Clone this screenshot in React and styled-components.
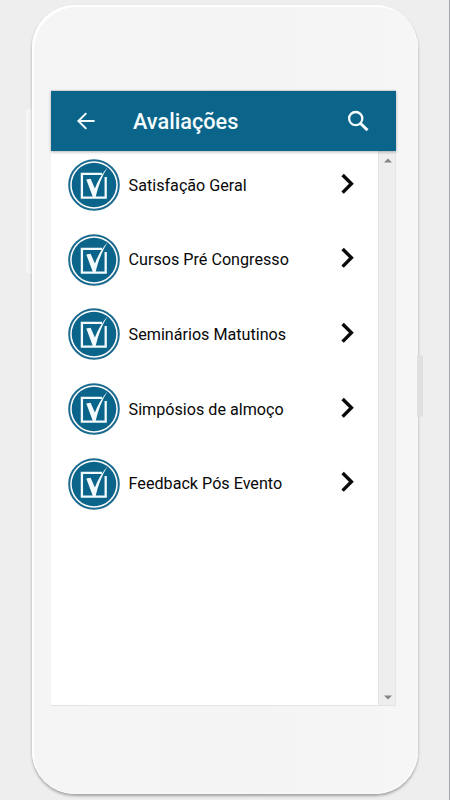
/**
*
* Avaliacoes
*
*/

import React from 'react';
import styled, { createGlobalStyle } from 'styled-components';

const GlobalStyle = createGlobalStyle`
* {
  box-sizing: border-box;
}
body {
  margin: 0;
  overflow: hidden;
  background: #eeeeee;
  font-family: Roboto, 'Liberation Sans', sans-serif;
}
`;

const Page = styled.div`
position: relative;
display: flex;
width: 450px;
height: 800px;
padding: 5px 0 0 32px;
background: #eeeeee;
border-right: 1px solid #a4a4b0;
overflow: hidden;
`;
const SideButton = styled.div`
position: absolute;
top: ${props => props.top}px;
left: ${props => props.left}px;
width: ${props => props.width}px;
height: ${props => props.height}px;
background: ${props => props.color};
border-radius: ${props => props.radius};
`;
const Phone = styled.div`
position: relative;
flex: none;
width: 386px;
height: 789px;
padding: 86px 22px 0 19px;
background: linear-gradient(90deg, #f5f5f5 0%, #f4f4f4 60%, #f6f6f6 100%);
border-radius: 43px;
box-shadow: 0 2px 3px rgba(0, 0, 0, 0.33), inset 2px 2px 1px #ffffff, inset -1px -1px 1px #fafafa;
`;
const Screen = styled.div`
display: flex;
flex-direction: column;
width: 345px;
height: 615px;
background: #ffffff;
border-bottom: 1px solid #e3e3e3;
box-shadow: 0 -1px 0 #dcdcdc;
`;
const Header = styled.header`
position: relative;
display: flex;
flex: none;
align-items: center;
height: 60px;
padding: 0 27px 0 25px;
color: #f5fbfd;
background: #0b658a;
box-shadow: 0 1px 3px rgba(0, 0, 0, 0.3);
`;
const Title = styled.h1`
flex: 1;
margin: 2px 0 0 37px;
font-size: 21.7px;
font-weight: 500;
line-height: 26px;
`;
const Content = styled.div`
display: flex;
flex: 1;
`;
const List = styled.ul`
flex: 1;
margin: 0;
padding: 0;
list-style: none;
`;
const Row = styled.li`
display: flex;
align-items: center;
height: 74.6px;
padding: 0 23px 6px 17px;
`;
const Label = styled.span`
flex: 1;
margin: 1px 0 0 8.6px;
color: #080808;
font-size: 16.15px;
line-height: 20px;
`;
const Scrollbar = styled.div`
display: flex;
flex-direction: column;
justify-content: space-between;
align-items: center;
width: 18px;
padding: 7px 0 5px 1px;
background: #eeeeee;
border-left: 1px solid #e4e4e4;
border-right: 1px solid #e6e6e6;
`;
const Icon = styled.svg`
display: block;
flex: none;
`;
const ChevronIcon = styled(Icon)`
margin-bottom: 3px;
`;

function BackIcon() {
  return (
    <Icon width="20" height="20" viewBox="0 0 20 20" fill="none" stroke="currentColor" strokeWidth="2">
      <path d="M18.6 10H3M10.3 2.1L2.4 10l7.9 7.9" />
    </Icon>
  );
}

function SearchIcon() {
  return (
    <Icon width="22" height="22" viewBox="0 0 22 22" fill="none" stroke="currentColor">
      <circle cx="8.7" cy="8.6" r="6.6" strokeWidth="2.3" />
      <path d="M13.4 13.2l7.1 7.1" strokeWidth="3" />
    </Icon>
  );
}

function CheckBadge() {
  return (
    <Icon width="52" height="52" viewBox="0 0 52 52" fill="none">
      <circle cx="26" cy="26" r="24.8" fill="#ffffff" stroke="#1b6b8f" strokeWidth="2" />
      <circle cx="26" cy="26" r="22.3" fill="#0b658a" />
      <path d="M34 14.8H13.9v23.8h23.8V18" stroke="#f2fafd" strokeWidth="2.3" />
      <path d="M39.6 8.3C34 14.5 29.6 22 26.9 29.6L22.6 19.7l-4.3.8L25 38.4h2.5C30 27.6 33.8 17.6 39.6 8.3z" fill="#f2fafd" />
    </Icon>
  );
}

function Chevron() {
  return (
    <ChevronIcon width="14" height="22" viewBox="0 0 14 22" fill="none" stroke="#0a0a0a" strokeWidth="3.4">
      <path d="M1.6 2l8.8 8.8-8.8 8.8" />
    </ChevronIcon>
  );
}

function Arrow(props) {
  return (
    <Icon width="8" height="5" viewBox="0 0 8 5" fill="#858585">
      <path d={props.down ? 'M0 .5h8l-4 4z' : 'M0 4.5h8l-4-4z'} />
    </Icon>
  );
}

const items = [
  'Satisfação Geral',
  'Cursos Pré Congresso',
  'Seminários Matutinos',
  'Simpósios de almoço',
  'Feedback Pós Evento',
];

function App() {
  return (
    <Page>
      <GlobalStyle />
      <SideButton top={109} left={26} width={6} height={164} color="#f6f6f6" radius="3px 0 0 3px" />
      <Phone>
        <Screen>
          <Header>
            <BackIcon />
            <Title>Avaliações</Title>
            <SearchIcon />
          </Header>
          <Content>
            <List>
              {items.map(item => (
                <Row key={item}>
                  <CheckBadge />
                  <Label>{item}</Label>
                  <Chevron />
                </Row>
              ))}
            </List>
            <Scrollbar>
              <Arrow />
              <Arrow down />
            </Scrollbar>
          </Content>
        </Screen>
      </Phone>
      <SideButton top={355} left={417} width={6} height={62} color="#e0e0e0" radius="0 3px 3px 0" />
    </Page>
  );
}

export default App;
